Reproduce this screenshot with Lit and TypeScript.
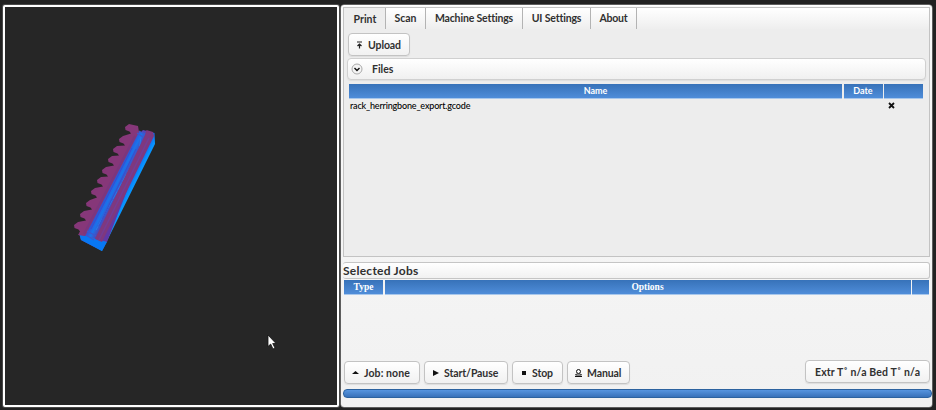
import { LitElement, html, svg, css } from "lit";
import { customElement } from "lit/decorators.js";

const TABS = [
  { label: "Print", cls: "print" },
  { label: "Scan", cls: "scan" },
  { label: "Machine Settings", cls: "machine" },
  { label: "UI Settings", cls: "ui" },
  { label: "About", cls: "about" },
];

const TIPS = [[125, 127], [119, 139], [113, 149], [108, 159], [102, 170], [97, 180], [91, 191], [86, 203], [80, 214], [74, 225]];
const TEETH = TIPS.map(([x, y]) => `L${x + 4} ${y - 3}L${x} ${y}L${x + 0.5} ${y + 3}L${x + 4.5} ${y + 4.5}L${x + 6} ${y + 6.5}`).join("");

@customElement("model-view")
class ModelView extends LitElement {
  static styles = css`
    :host { display: block; box-sizing: border-box; width: 336px; height: 402px; border: 2px solid #fff; border-radius: 2px; background: #262626; box-shadow: 0 0 0 1px #4a4a4a; }
    svg { display: block; }
  `;
  render() {
    return html`<svg width="332" height="398" viewBox="5 7 332 398">
      <defs>
        <linearGradient id="side" gradientUnits="userSpaceOnUse" x1="121" y1="184" x2="131" y2="189">
          <stop offset="0" stop-color="#5844b4" /><stop offset=".5" stop-color="#1460ee" /><stop offset="1" stop-color="#0894ff" />
        </linearGradient>
        <linearGradient id="groove" gradientUnits="userSpaceOnUse" x1="106" y1="181" x2="122" y2="189">
          <stop offset="0" stop-color="#7034a0" /><stop offset=".35" stop-color="#3551d0" /><stop offset=".6" stop-color="#1874ec" /><stop offset="1" stop-color="#6138a5" />
        </linearGradient>
      </defs>
      <path d="M79 233 L81 240 L102 251 L155 144 L154.500 133 L143 130 L127 146 L88 229Z" fill="url(#side)" />
      <path d="M79 233 L81 240 L102 251 L107 242 L89 236Z" fill="#0878f4" />
      <path d="M137 131 L149 134 L107 242 L82 235Z" fill="url(#groove)" />
      <path d="M141 137 L139 151 L96 230" fill="none" stroke="#277ce8" stroke-width="1" stroke-dasharray="9 1" />
      <path d="M136 149 L99 226 M132 148 L91 229" fill="none" stroke="#354fd0" stroke-width="1" />
      <path d="M146.500 130 L153 132 L154 136 L102 242 L95 239 L145 135Z" fill="#7e387f" />
      <path d="M149 138 L99 240" fill="none" stroke="#743d96" stroke-width="1.500" />
      <path d="M138 126${TEETH}L78 235L85 236L139 132Z" fill="#863779" />
      <path d="M135 136 L84 234" fill="none" stroke="#7b367e" stroke-width="2" />
      <path d="M137 133 L143 137 M139 131 L144 134 M87 231 L96 236 M86 235 L94 240" stroke="#4056cb" stroke-width="1.200" />
      <path d="M268 335 V346.500 L270.700 344.100 L273 349 L275 348 L272.700 343.500 H276Z" fill="#fff" stroke="#111" stroke-width=".8" />
    </svg>`;
  }
}

@customElement("app-root")
export class AppRoot extends LitElement {
  static styles = css`
    :host { display: block; width: 936px; height: 410px; background: #222; color: #303030; font-family: Lato, "Open Sans", sans-serif; font-size: 10.5px; font-weight: 700; font-variant-ligatures: none; overflow: hidden; }
    * { box-sizing: border-box; }
    .frame { display: flex; gap: 2px; padding: 5px 0 0 3px; }
    .console { width: 591px; height: 402px; padding: 2px 0 0 2px; border-radius: 3px; background: linear-gradient(#fafafa, #f1f1f1); box-shadow: 0 0 0 .5px #999; border-top: 1px solid #fff; }
    .print-panel { width: 587px; height: 250px; margin-top: -1px; border: 1px solid #c3c3c3; background: #ededed; }
    .tabs { display: flex; height: 21px; background: linear-gradient(#fff, #eee); }
    .tab { display: flex; align-items: center; justify-content: center; border-right: 1px solid #b3b3b3; white-space: nowrap; padding-bottom: 1px; }
    .tab:first-child { background: #ededed; padding: 1px 0 0 1px; }
    .print { width: 42px; } .scan { width: 40px; } .machine { width: 97px; letter-spacing: -.16px; } .ui { width: 68px; letter-spacing: -.15px; } .about { width: 46px; letter-spacing: -.2px; }
    .btn { display: flex; align-items: center; height: 23px; border: 1px solid #c3c3c3; border-radius: 4px; background: linear-gradient(#fff, #f1f1f1); box-shadow: 0 1px 1px #ddd; white-space: nowrap; padding-left: 6px; gap: 4px; }
    .btn svg { flex: none; width: 9px; height: 10px; }
    .upload { width: 62px; margin: 4px 0 0 4px; letter-spacing: -.1px; }
    .files { display: flex; align-items: center; width: 579px; height: 22px; margin: 2px 0 0 3px; padding-left: 3px; gap: 9px; border: 1px solid #d0d0d0; border-radius: 4px; background: linear-gradient(#fff, #f0f0f0); box-shadow: 0 1px 1px #ddd; }
    .files svg { width: 12px; height: 12px; }
    .head { display: grid; height: 14px; color: #fff; font-size: 9px; line-height: 14px; text-align: center; }
    .cell { background: linear-gradient(#3772b9, #4f8dd9); border-bottom: 1px solid #a8c7eb; }
    .file-head { width: 574px; grid-template-columns: 493px 39px 39px; gap: 1.500px; margin: 4px 0 0 5px; }
    .row { display: flex; justify-content: space-between; align-items: center; width: 545px; height: 15px; margin-left: 6px; font-size: 9px; font-weight: 500; color: #000; letter-spacing: -.17px; }
    .selected { display: flex; align-items: center; width: 587px; height: 17px; margin-top: 5px; border: 1px solid #c5c5c5; border-left-width: 0; border-radius: 3px; background: linear-gradient(#fff, #f1f1f1); font-size: 12px; line-height: 15px; letter-spacing: .25px; }
    .job-head { width: 585px; grid-template-columns: 39px 526px 17px; gap: 1.500px; margin: 1px 0 0 1px; font-family: "Liberation Serif", serif; font-size: 9.500px; }
    .actions { display: flex; width: 586px; height: 24px; margin: 66px 0 0 1px; gap: 4px; }
    .actions .btn { margin-top: 1px; }
    .actions .temp { margin: 0 0 0 auto; width: 125px; padding-left: 9px; letter-spacing: .14px; }
    .job { width: 76px; letter-spacing: .1px; } .start { width: 84px; letter-spacing: -.1px; } .stop { width: 51px; letter-spacing: -.1px; } .manual { width: 63px; letter-spacing: -.1px; }
    .progress { width: 589px; height: 9px; margin-top: 5px; border: 1px solid #2c629f; border-radius: 4px; background: linear-gradient(#5795df, #3871b9); }
  `;

  icon(shape: unknown) {
    return html`<svg viewBox="0 0 9 10">${shape}</svg>`;
  }

  render() {
    return html`<main class="frame">
      <model-view></model-view>
      <section class="console">
        <div class="print-panel">
          <nav class="tabs">${TABS.map((t) => html`<div class="tab ${t.cls}">${t.label}</div>`)}</nav>
          <div class="btn upload">${this.icon(svg`<path d="M2 2H7M4.500 8.500V4M2.500 6L4.500 4L6.500 6" fill="none" stroke="#222" stroke-width="1.200"/>`)}<span>Upload</span></div>
          <div class="files"><svg viewBox="0 0 12 12"><circle cx="6" cy="6" r="5" fill="#f4f4f4" stroke="#aaa"/><path d="M3.500 5L6 7.500L8.500 5" fill="none" stroke="#111" stroke-width="1.400"/></svg><span>Files</span></div>
          <div class="head file-head"><div class="cell">Name</div><div class="cell">Date</div><div class="cell"></div></div>
          <div class="row"><span class="filename">rack_herringbone_export.gcode</span><svg width="7" height="7" viewBox="0 0 7 7"><path d="M1 1L6 6M6 1L1 6" stroke="#111" stroke-width="1.800"/></svg></div>
        </div>
        <div class="selected">Selected Jobs</div>
        <div class="head job-head"><div class="cell">Type</div><div class="cell">Options</div><div class="cell"></div></div>
        <div class="actions">
          <div class="btn job">${this.icon(svg`<path d="M1 6L4.500 3L8 6Z" fill="#111"/>`)}<span>Job: none</span></div>
          <div class="btn start">${this.icon(svg`<path d="M2 2L8 5L2 8Z" fill="#111"/>`)}<span>Start/Pause</span></div>
          <div class="btn stop">${this.icon(svg`<path d="M3 3H7V7H3Z" fill="#111"/>`)}<span>Stop</span></div>
          <div class="btn manual">${this.icon(svg`<circle cx="4.500" cy="3.500" r="2" fill="none" stroke="#111"/><path d="M3 5.500L1.500 7H7.500L6 5.500M1 8.500H8" fill="none" stroke="#111"/>`)}<span>Manual</span></div>
          <div class="btn temp">Extr T˚ n/a Bed T˚ n/a</div>
        </div>
        <div class="progress"></div>
      </section>
    </main>`;
  }
}
